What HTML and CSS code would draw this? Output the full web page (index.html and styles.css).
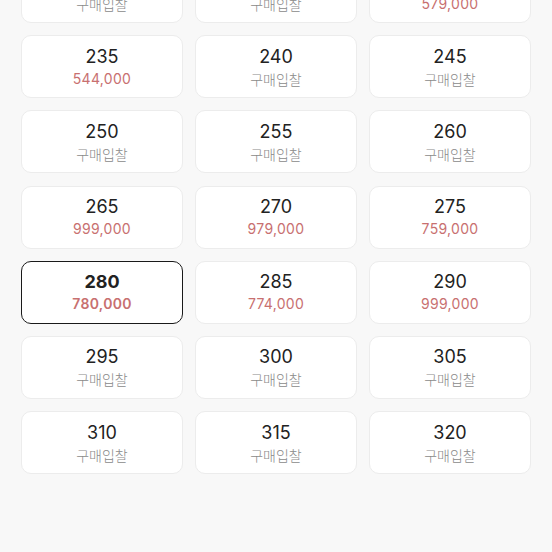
FILE: index.html
```html
<!DOCTYPE html>
<html lang="ko">
<head>
  <meta charset="UTF-8">
  <title>사이즈 선택</title>
  <meta name="viewport" content="width=device-width, initial-scale=1.0">
  <link rel="stylesheet" href="styles.css">
</head>
<body>

<!-- 사이즈 목록 -->
<div class="size-grid">
  <div class="size-card"><div class="size">220</div><div class="bid">구매입찰</div></div>
  <div class="size-card"><div class="size">225</div><div class="bid">구매입찰</div></div>
  <div class="size-card"><div class="size">230</div><div class="price">579,000</div></div>

  <div class="size-card"><div class="size">235</div><div class="price">544,000</div></div>
  <div class="size-card"><div class="size">240</div><div class="bid">구매입찰</div></div>
  <div class="size-card"><div class="size">245</div><div class="bid">구매입찰</div></div>

  <div class="size-card"><div class="size">250</div><div class="bid">구매입찰</div></div>
  <div class="size-card"><div class="size">255</div><div class="bid">구매입찰</div></div>
  <div class="size-card"><div class="size">260</div><div class="bid">구매입찰</div></div>

  <div class="size-card"><div class="size">265</div><div class="price">999,000</div></div>
  <div class="size-card"><div class="size">270</div><div class="price">979,000</div></div>
  <div class="size-card"><div class="size">275</div><div class="price">759,000</div></div>

  <div class="size-card selected"><div class="size">280</div><div class="price">780,000</div></div>
  <div class="size-card"><div class="size">285</div><div class="price">774,000</div></div>
  <div class="size-card"><div class="size">290</div><div class="price">999,000</div></div>

  <div class="size-card"><div class="size">295</div><div class="bid">구매입찰</div></div>
  <div class="size-card"><div class="size">300</div><div class="bid">구매입찰</div></div>
  <div class="size-card"><div class="size">305</div><div class="bid">구매입찰</div></div>

  <div class="size-card"><div class="size">310</div><div class="bid">구매입찰</div></div>
  <div class="size-card"><div class="size">315</div><div class="bid">구매입찰</div></div>
  <div class="size-card"><div class="size">320</div><div class="bid">구매입찰</div></div>
</div>

</body>
</html>
```

FILE: styles.css
```css
body {
  margin: 0;
  background: #f8f8f8;
  font-family: Inter, Roboto, "Noto Sans CJK KR", sans-serif;
  color: #222;
  height: 552px;
  overflow: hidden;
}
.size-grid {
  display: grid;
  grid-template-columns: repeat(3, 1fr);
  column-gap: 12px;
  row-gap: 12.2px;
  padding: 0 21px;
  margin-top: -40px;
}
.size-card {
  height: 63px;
  box-sizing: border-box;
  background: #fff;
  border: 1px solid #ececec;
  border-radius: 10px;
  display: flex;
  flex-direction: column;
  align-items: center;
  justify-content: center;
}
.size-card.selected {
  border: 1.5px solid #1a1a1a;
}
.size {
  font-size: 18px;
  line-height: 22px;
  color: #222;
}
.selected .size { font-weight: 700; }
.price, .bid {
  font-size: 14px;
  line-height: 18px;
  margin-top: 2px;
}
.price { color: #c87070; letter-spacing: 0.3px; }
.selected .price { font-weight: 600; }
.bid { color: #8a8a8a; font-family: "Noto Sans CJK KR", sans-serif; font-weight: 300; }
```
